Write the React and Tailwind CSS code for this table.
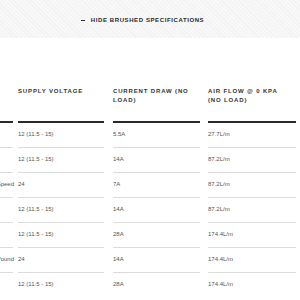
import React from "react";

const rows = [
  ["", "12 (11.5 - 15)", "5.5A", "27.7L/m"],
  ["", "12 (11.5 - 15)", "14A", "87.2L/m"],
  ["24V High Speed", "24", "7A", "87.2L/m"],
  ["", "12 (11.5 - 15)", "14A", "87.2L/m"],
  ["", "12 (11.5 - 15)", "28A", "174.4L/m"],
  ["24V Dual Wound", "24", "14A", "174.4L/m"],
  ["", "12 (11.5 - 15)", "28A", "174.4L/m"],
];

const widths = ["w-[90px] mr-[5px]", "w-[86px] mr-[9px]", "w-[87px] mr-[8px]", "w-[88px]"];

export default function App() {
  return (
    <div className="w-[300px] h-[300px] overflow-hidden bg-white" style={{ fontFamily: '"Liberation Sans", Arial, sans-serif' }}>
      <div className="h-[38px] flex items-center justify-center bg-[#f6f6f6] bg-[repeating-linear-gradient(45deg,#f2f2f2_0px,#f2f2f2_1px,#f8f8f8_1px,#f8f8f8_3px)]">
        <div className="flex items-center pr-[15px] pt-[2px]">
          <span className="block w-[4px] h-[1px] bg-[#333] mr-[6px]"></span>
          <span className="text-[6px] leading-[8px] font-bold tracking-[0.6px] text-[#2a2a2a]">HIDE BRUSHED SPECIFICATIONS</span>
        </div>
      </div>
      <div className="overflow-hidden pt-[49px]">
        <div className="-ml-[77px] w-[400px]">
          <div className="flex">
            {["", "SUPPLY VOLTAGE", "CURRENT DRAW (NO|LOAD)", "AIR FLOW @ 0 KPA|(NO LOAD)"].map((h, i) => (
              <div key={i} className={`${widths[i]} h-[36px] border-b-2 border-[#2a2a2a] shrink-0`}>
                <div className="text-[6px] leading-[9px] font-bold tracking-[0.85px] text-[#333]">
                  {h.split("|").map((l, j) => (
                    <div key={j}>{l}</div>
                  ))}
                </div>
              </div>
            ))}
          </div>
          {rows.map((r, ri) => (
            <div key={ri} className="flex">
              {r.map((c, ci) => (
                <div
                  key={ci}
                  className={`${widths[ci]} h-[25px] shrink-0 pt-[6px] text-[6px] leading-[10px] text-[#555] whitespace-nowrap ${ri < rows.length - 1 ? "border-b border-[#dcdcdc]" : ""} ${ci === 0 ? "flex justify-end" : ""}`}
                >
                  <span className={ci === 0 ? "-mr-[1px]" : ""}>{c}</span>
                </div>
              ))}
            </div>
          ))}
        </div>
      </div>
    </div>
  );
}
